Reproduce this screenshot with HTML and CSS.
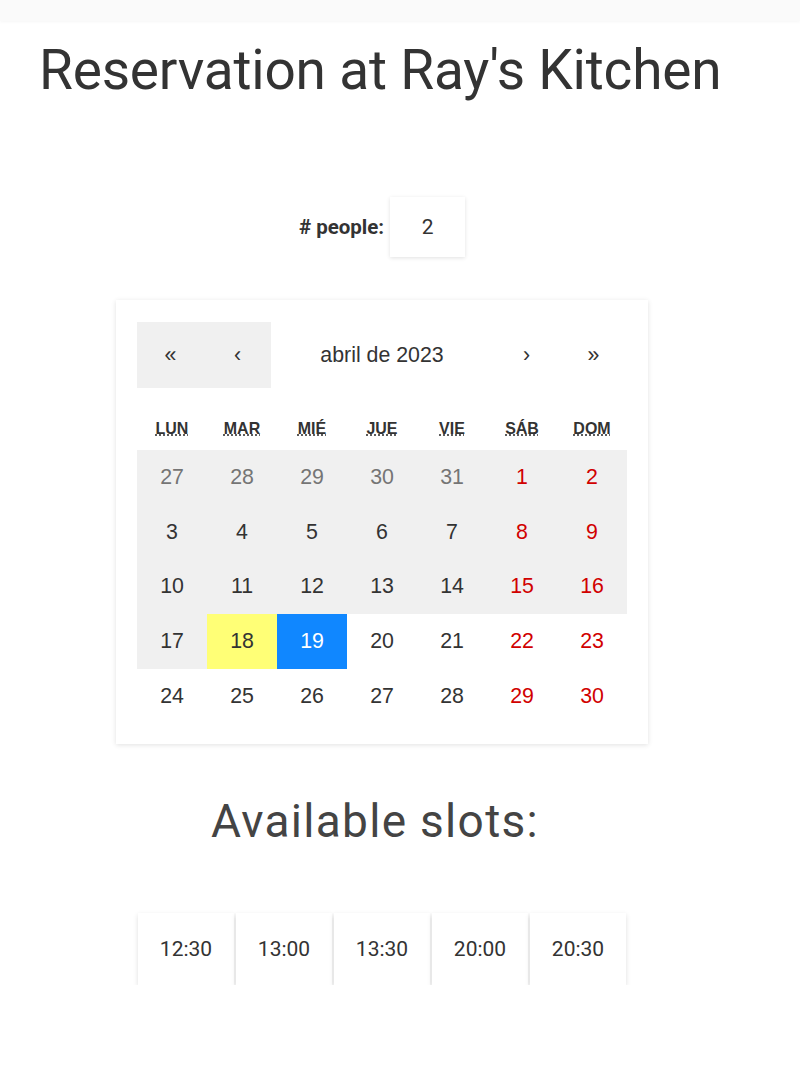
FILE: index.html
```html
<!DOCTYPE html>
<html>
<head>
  <title>Reservation at Ray's Kitchen</title>
  <link rel="stylesheet" href="styles.css">
</head>
<body>
  <div class="topbar"></div>

  <main class="page">
    <h1 class="title">Reservation at Ray's Kitchen</h1>

    <div class="people">
      <label for="people">#&nbsp;people:</label>
      <input id="people" class="people-input" type="number" value="2">
    </div>

    <div class="calendar">
      <div class="cal-nav">
        <button class="nav-btn nav-btn--past">«</button>
        <button class="nav-btn nav-btn--past">‹</button>
        <span class="nav-label">abril de 2023</span>
        <button class="nav-btn">›</button>
        <button class="nav-btn">»</button>
      </div>

      <div class="weekdays">
        <div><abbr title="lunes">LUN</abbr></div>
        <div><abbr title="martes">MAR</abbr></div>
        <div><abbr title="miércoles">MIÉ</abbr></div>
        <div><abbr title="jueves">JUE</abbr></div>
        <div><abbr title="viernes">VIE</abbr></div>
        <div><abbr title="sábado">SÁB</abbr></div>
        <div><abbr title="domingo">DOM</abbr></div>
      </div>

      <div class="days">
        <button class="tile disabled other">27</button>
        <button class="tile disabled other">28</button>
        <button class="tile disabled other">29</button>
        <button class="tile disabled other">30</button>
        <button class="tile disabled other">31</button>
        <button class="tile disabled weekend">1</button>
        <button class="tile disabled weekend">2</button>

        <button class="tile disabled">3</button>
        <button class="tile disabled">4</button>
        <button class="tile disabled">5</button>
        <button class="tile disabled">6</button>
        <button class="tile disabled">7</button>
        <button class="tile disabled weekend">8</button>
        <button class="tile disabled weekend">9</button>

        <button class="tile disabled">10</button>
        <button class="tile disabled">11</button>
        <button class="tile disabled">12</button>
        <button class="tile disabled">13</button>
        <button class="tile disabled">14</button>
        <button class="tile disabled weekend">15</button>
        <button class="tile disabled weekend">16</button>

        <button class="tile disabled">17</button>
        <button class="tile now">18</button>
        <button class="tile active">19</button>
        <button class="tile">20</button>
        <button class="tile">21</button>
        <button class="tile weekend">22</button>
        <button class="tile weekend">23</button>

        <button class="tile">24</button>
        <button class="tile">25</button>
        <button class="tile">26</button>
        <button class="tile">27</button>
        <button class="tile">28</button>
        <button class="tile weekend">29</button>
        <button class="tile weekend">30</button>
      </div>
    </div>

    <h2 class="slots-title">Available slots:</h2>

    <div class="slots">
      <button class="slot">12:30</button>
      <button class="slot">13:00</button>
      <button class="slot">13:30</button>
      <button class="slot">20:00</button>
      <button class="slot">20:30</button>
    </div>
  </main>
</body>
</html>
```

FILE: styles.css
```css
body {
  margin: 0;
  font-family: Roboto, "Noto Sans", sans-serif;
  color: #333;
  background: #fff;
}

.topbar {
  height: 21px;
  background: #fafafa;
  box-shadow: 0 1px 3px rgba(0, 0, 0, 0.04);
}

.page {
  width: 764px;
  display: flex;
  flex-direction: column;
  align-items: center;
}

.title {
  align-self: flex-start;
  margin: 16px 0 0 39px;
  font-size: 55px;
  font-weight: 400;
  letter-spacing: -0.2px;
  line-height: 1.2;
  color: #333;
}

/* party size */
.people {
  display: flex;
  align-items: center;
  gap: 6px;
  margin-top: 94px;
}

.people label {
  font-size: 20.5px;
  font-weight: 700;
}

.people-input {
  width: 75px;
  height: 60px;
  box-sizing: border-box;
  border: none;
  outline: none;
  text-align: center;
  font-family: Roboto, sans-serif;
  font-size: 21px;
  color: #333;
  background: #fff;
  box-shadow: 0 1px 4px rgba(0, 0, 0, 0.12);
  -moz-appearance: textfield;
}

.people-input::-webkit-inner-spin-button,
.people-input::-webkit-outer-spin-button {
  -webkit-appearance: none;
  margin: 0;
}

/* calendar */
.calendar {
  width: 490px;
  margin-top: 43px;
  padding: 22px 21px 20px;
  background: #fff;
  box-shadow: 0 1px 5px rgba(0, 0, 0, 0.12);
  font-family: "Liberation Sans", Arial, sans-serif;
  font-size: 21.33px;
  color: #333;
}

.calendar button {
  font: inherit;
  color: inherit;
  border: none;
  background: none;
  padding: 0;
  cursor: pointer;
}

.cal-nav {
  display: flex;
  height: 66px;
}

.nav-btn {
  width: 67px;
}

.nav-btn--past {
  background: #f0f0f0 !important;
}

.nav-label {
  flex: 1;
  display: flex;
  align-items: center;
  justify-content: center;
}

.weekdays {
  display: grid;
  grid-template-columns: repeat(7, 1fr);
  height: 42px;
  margin-top: 20px;
  align-items: center;
  text-align: center;
  font-size: 0.75em;
  font-weight: 700;
}

.weekdays abbr {
  text-decoration: underline dotted;
}

.days {
  display: grid;
  grid-template-columns: repeat(7, 1fr);
}

.tile {
  height: 54.8px;
}

.tile.disabled {
  background: #f0f0f0;
}

.tile.other {
  color: #757575;
}

.tile.weekend {
  color: #d10000;
}

.tile.now {
  background: #ffff76;
}

.tile.active {
  background: #1087ff;
  color: #fff;
}

/* time slots */
.slots-title {
  margin: 50px 14px 0 0;
  font-size: 46px;
  font-weight: 400;
  line-height: 1.2;
  color: #444;
  letter-spacing: 1.3px;
}

.slots {
  display: flex;
  gap: 2px;
  margin-top: 64px;
}

.slot {
  width: 96px;
  height: 72px;
  border: none;
  background: #fff;
  font-family: Roboto, sans-serif;
  font-size: 21px;
  color: #333;
  box-shadow: 0 2px 5px rgba(0, 0, 0, 0.13);
  cursor: pointer;
}
```
